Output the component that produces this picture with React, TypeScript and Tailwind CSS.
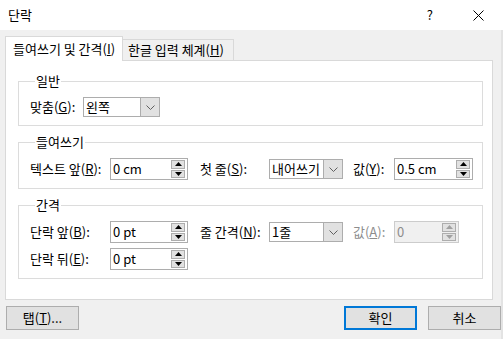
import React from "react";

function SpinArrow({ up, disabled }: { up?: boolean; disabled?: boolean }) {
  return (
    <div className="flex flex-1 items-center justify-center border border-[#adadad] bg-[#e1e1e1]">
      <svg width="7" height="4" viewBox="0 0 7 4">
        <polygon
          points={up ? "0,4 7,4 3.5,0" : "0,0 7,0 3.5,4"}
          fill={disabled ? "#a0a0a0" : "#000"}
        />
      </svg>
    </div>
  );
}

function Spin({ value, width, disabled }: { value: string; width: string; disabled?: boolean }) {
  return (
    <div
      className={`flex h-[22px] shrink-0 border ${width} ${
        disabled ? "border-[#cccccc] bg-[#f0f0f0] text-[#8d8d8d]" : "border-[#adadad] bg-white text-black"
      }`}
    >
      <div className="flex-1 overflow-hidden whitespace-nowrap pl-[2px] leading-[20px]">{value}</div>
      <div className="flex w-[16px] flex-col gap-px py-[1px] pr-[2px]">
        <SpinArrow up disabled={disabled} />
        <SpinArrow disabled={disabled} />
      </div>
    </div>
  );
}

function Combo({ value, width }: { value: string; width: string }) {
  return (
    <div className={`flex h-[20px] shrink-0 border border-[#adadad] bg-white ${width}`}>
      <div className="flex-1 overflow-hidden whitespace-nowrap pl-[2px] leading-[18px]">{value}</div>
      <div className="flex w-[19px] items-center justify-center border-l border-[#adadad] bg-[#e1e1e1]">
        <svg width="9" height="5" viewBox="0 0 9 5">
          <polyline points="0.5,0.5 4.5,4.5 8.5,0.5" fill="none" stroke="#606060" strokeWidth="1" />
        </svg>
      </div>
    </div>
  );
}

function Group({ title, children }: { title: string; children: React.ReactNode }) {
  return (
    <fieldset className="mr-[9px] border border-[#dcdcdc] pb-[8px] pl-[11px] pt-[8px]">
      <legend className="ml-[5px] px-[1px] leading-[16px]">{title}</legend>
      {children}
    </fieldset>
  );
}

function Btn({ children, primary, className }: { children: React.ReactNode; primary?: boolean; className?: string }) {
  return (
    <div
      className={`flex h-[24px] w-[73px] items-center justify-center bg-[#e1e1e1] ${
        primary ? "border-2 border-[#0078d7]" : "border border-[#adadad]"
      } ${className ?? ""}`}
    >
      {children}
    </div>
  );
}

export default function App() {
  return (
    <div className="flex h-[339px] w-[503px] flex-col overflow-hidden bg-[#f0f0f0] font-['Noto_Sans_CJK_KR',sans-serif] text-[13px] leading-[16px] text-black">
      {/* title bar */}
      <div className="flex h-[30px] shrink-0 items-center bg-white">
        <span className="ml-[8px] flex-1">단락</span>
        <span className="mr-[40px] text-[13px]">?</span>
        <svg className="mr-[19px]" width="11" height="11" viewBox="0 0 11 11">
          <path d="M0.5 0.5 L10.5 10.5 M10.5 0.5 L0.5 10.5" stroke="#000" strokeWidth="1" />
        </svg>
      </div>

      <div className="flex flex-1">
        <div className="flex flex-1 flex-col pl-[5px]">
          {/* tabs */}
          <div className="mt-[6px] flex h-[24px] items-end">
            <div className="relative z-10 -mb-px flex h-[25px] w-[118px] items-center border border-b-0 border-[#d9d9d9] bg-white pl-[7px]">
              들여쓰기 및 간격(<u>I</u>)
            </div>
            <div className="flex h-[21px] w-[111px] items-center border border-b-0 border-l-0 border-[#d9d9d9] pl-[5px]">
              한글 입력 체계(<u>H</u>)
            </div>
          </div>

          {/* panel */}
          <div className="flex h-[240px] w-[488px] flex-col gap-[8px] border border-[#d9d9d9] bg-white pl-[12px] pt-[12px]">
            <Group title="일반">
              <div className="flex h-[20px] items-center">
                <span className="w-[53px]">
                  맞춤(<u>G</u>):
                </span>
                <Combo value="왼쪽" width="w-[77px]" />
              </div>
            </Group>

            <Group title="들여쓰기">
              <div className="flex h-[22px] items-center">
                <span className="w-[80px]">
                  텍스트 앞(<u>R</u>):
                </span>
                <Spin value="0 cm" width="w-[78px]" />
                <span className="ml-[12px] w-[69px]">
                  첫 줄(<u>S</u>):
                </span>
                <Combo value="내어쓰기" width="w-[74px]" />
                <span className="ml-[10px] w-[41px]">
                  값(<u>Y</u>):
                </span>
                <Spin value="0.5 cm" width="w-[79px]" />
              </div>
            </Group>

            <Group title="간격">
              <div className="flex flex-col gap-[5px]">
                <div className="flex h-[22px] items-center">
                  <span className="w-[80px]">
                    단락 앞(<u>B</u>):
                  </span>
                  <Spin value="0 pt" width="w-[78px]" />
                  <span className="ml-[12px] w-[69px]">
                    줄 간격(<u>N</u>):
                  </span>
                  <Combo value="1줄" width="w-[74px]" />
                  <span className="ml-[10px] w-[41px] text-[#8d8d8d]">
                    값(<u>A</u>):
                  </span>
                  <Spin value="0" width="w-[65px]" disabled />
                </div>
                <div className="flex h-[22px] items-center">
                  <span className="w-[80px]">
                    단락 뒤(<u>E</u>):
                  </span>
                  <Spin value="0 pt" width="w-[78px]" />
                </div>
              </div>
            </Group>
          </div>

          {/* buttons */}
          <div className="mt-[6px] flex items-center pl-[1px]">
            <Btn>
              탭(<u>T</u>)...
            </Btn>
            <div className="flex-1" />
            <Btn primary>확인</Btn>
            <Btn className="ml-[11px]">취소</Btn>
          </div>
        </div>
        <div className="w-[2px] bg-[#e3e3e3]" />
      </div>
    </div>
  );
}
